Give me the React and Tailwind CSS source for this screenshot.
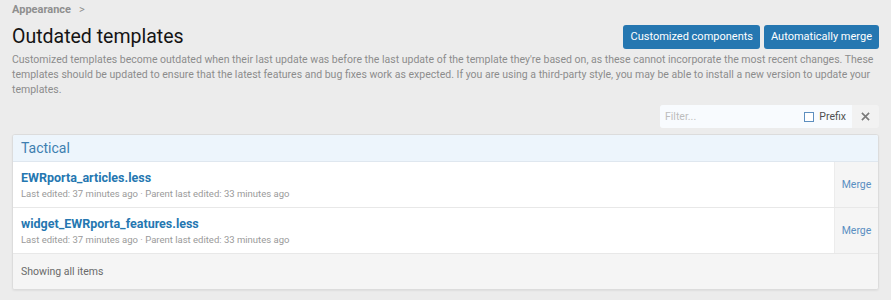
import React from 'react';

const rows = [
    { name: 'EWRporta_articles.less' },
    { name: 'widget_EWRporta_features.less' },
];

const App = () => {
    return (
        <div className="h-[300px] w-[891px] overflow-hidden bg-[#ececec] px-3 font-['Roboto',sans-serif] text-[#141414]">
            <div className="flex h-[20px] items-center gap-2 pt-px text-[11px] font-bold text-[#8f8f8f]">
                <span>Appearance</span>
                <span className="font-normal">&gt;</span>
            </div>
            <div className="mt-[3px] flex items-center justify-between">
                <h1 className="text-[19.5px] leading-[28px]">Outdated templates</h1>
                <div className="flex gap-1">
                    <button className="h-[24px] rounded-[3px] bg-[#2577b1] px-[7px] text-[11px] text-white">
                        Customized components
                    </button>
                    <button className="h-[24px] rounded-[3px] bg-[#2577b1] px-[7px] text-[11px] text-white">
                        Automatically merge
                    </button>
                </div>
            </div>
            <p className="mt-[1px] text-[10.5px] leading-[15px] text-[#8c8c8c]">
                Customized templates become outdated when their last update was before the last update of the template they're based on, as these cannot incorporate the most recent changes. These templates should be updated to ensure that the latest features and bug fixes work as expected. If you are using a third-party style, you may be able to install a new version to update your templates.
            </p>
            <div className="mt-[8px] flex justify-end">
                <div className="flex h-[23px] w-[219px] overflow-hidden rounded-[3px] bg-[#f2f2f2] text-[10.5px]">
                    <div className="flex flex-1 items-center bg-[#f8fbfe] px-[5px] text-[#bdbdbd]">Filter...</div>
                    <label className="flex items-center gap-[5px] bg-[#f8fbfe] px-[6px] text-[#505050]">
                        <span className="h-[10px] w-[10px] border border-[#5d8fbf] bg-white" />
                        Prefix
                    </label>
                    <div className="flex w-[27px] items-center justify-center text-[#7a7a7a]">
                        <svg width="9" height="9" viewBox="0 0 10 10" stroke="currentColor" strokeWidth="1.8">
                            <path d="M1 1l8 8M9 1l-8 8" />
                        </svg>
                    </div>
                </div>
            </div>
            <div className="mt-[6px] overflow-hidden rounded-[3px] border border-[#dcdcdc] bg-white shadow-[0_1px_2px_rgba(0,0,0,0.06)]">
                <div className="flex h-[27px] items-center border-b border-[#dfe7ef] bg-[#edf5fc] px-2 text-[14px] text-[#3e7fb0]">
                    Tactical
                </div>
                {rows.map(row => (
                    <div className="flex h-[46px] border-b border-[#e8e8e8]" key={row.name}>
                        <div className="flex flex-1 flex-col justify-center px-2 pt-px">
                            <div className="text-[12.5px] font-bold leading-[16px] text-[#2577b1]">{row.name}</div>
                            <div className="text-[9.5px] leading-[15px] text-[#9a9a9a]">
                                Last edited: 37 minutes ago · Parent last edited: 33 minutes ago
                            </div>
                        </div>
                        <div className="flex w-[44px] items-center justify-center border-l border-[#ececec] bg-[#f5f5f5] text-[10.5px] text-[#5a8fc2]">
                            Merge
                        </div>
                    </div>
                ))}
                <div className="flex h-[35px] items-center bg-[#f5f5f5] px-2 text-[10.5px] text-[#6a6a6a]">
                    Showing all items
                </div>
            </div>
        </div>
    );
};

export default App;
